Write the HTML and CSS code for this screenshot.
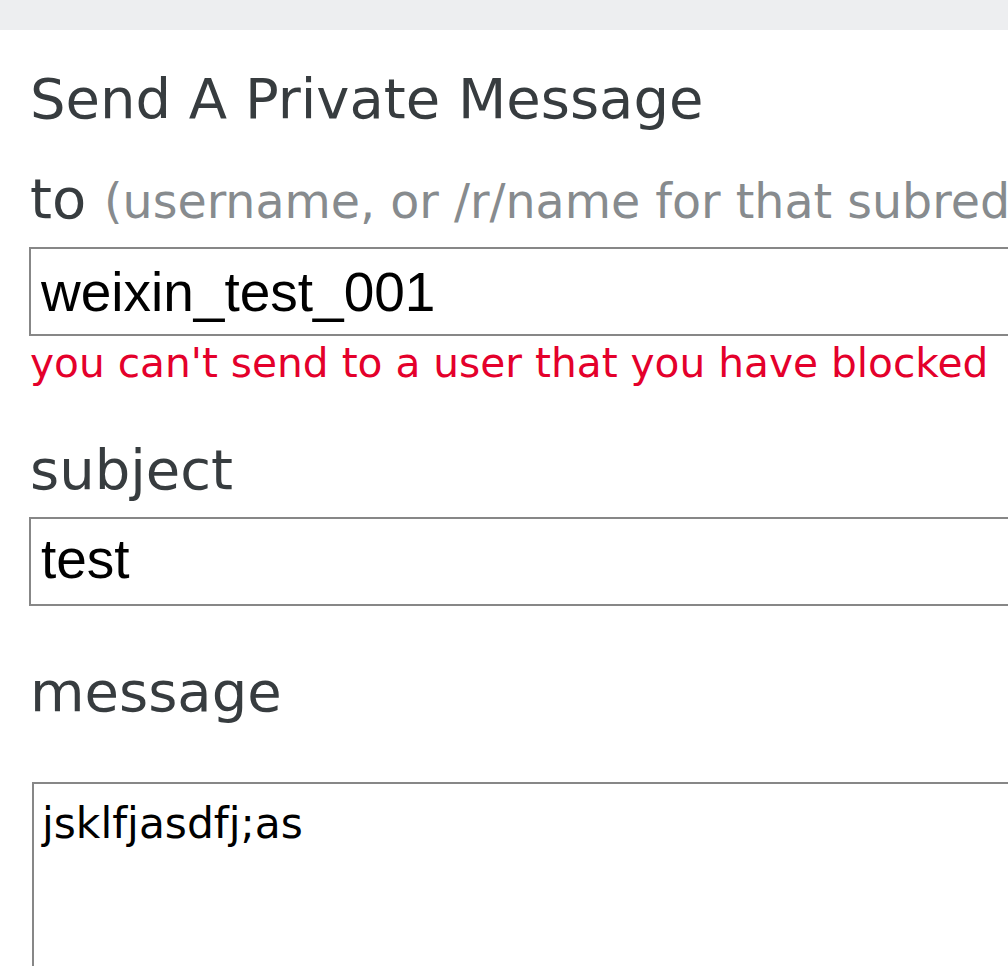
FILE: index.html
```html
<!DOCTYPE html>
<html lang="en">
<head>
<meta charset="utf-8">
<title>Send A Private Message</title>
<link rel="stylesheet" href="styles.css">
</head>
<body>
<div class="topbar"></div>
<main class="compose">
  <h1 class="title">Send A Private Message</h1>
  <div class="field">
    <label class="label" for="to">to <span class="hint">(username, or /r/name for that subreddit)</span></label>
    <input class="textbox" id="to" type="text" value="weixin_test_001">
    <div class="error">you can't send to a user that you have blocked</div>
  </div>
  <div class="field">
    <label class="label label-subject" for="subject">subject</label>
    <input class="textbox textbox-subject" id="subject" type="text" value="test">
  </div>
  <div class="field">
    <label class="label label-message" for="message">message</label>
    <textarea class="messagebox" id="message">jsklfjasdfj;as</textarea>
  </div>
</main>
</body>
</html>
```
FILE: styles.css
```css
html, body {
  margin: 0;
  padding: 0;
  background: #ffffff;
  overflow: hidden;
}

body {
  font-family: "DejaVu Sans", Verdana, sans-serif;
  color: #373c3f;
}

.topbar {
  height: 30px;
  background: #edeef0;
}

.compose {
  padding: 37px 0 0 30px;
  display: flex;
  flex-direction: column;
}

.title {
  margin: 0;
  font-size: 56px;
  line-height: 64px;
  font-weight: normal;
  color: #373c3f;
  white-space: nowrap;
}

.field {
  display: flex;
  flex-direction: column;
  align-items: flex-start;
}

.label {
  display: block;
  margin-top: 36px;
  font-size: 56px;
  line-height: 64px;
  height: 64px;
  color: #373c3f;
  white-space: nowrap;
}

.label-subject {
  margin-top: 51px;
}

.label-message {
  margin-top: 54px;
}

.hint {
  font-size: 47.5px;
  line-height: 40px;
  color: #878b8e;
}

.textbox {
  box-sizing: border-box;
  margin: 16px 0 0 -1px;
  width: 1100px;
  height: 89px;
  padding: 0 0 0 10px;
  border: 2px solid #878787;
  border-radius: 0;
  background: #fff;
  font-family: "Liberation Sans", Arial, sans-serif;
  font-size: 55px;
  color: #000;
  outline: none;
}

.textbox-subject {
  margin-top: 15px;
  height: 89px;
  padding-bottom: 6px;
}

.error {
  margin-top: 3px;
  font-size: 40.7px;
  line-height: 48px;
  color: #e4002b;
  white-space: nowrap;
}

.messagebox {
  box-sizing: border-box;
  margin: 58px 0 0 2px;
  width: 1100px;
  height: 400px;
  padding: 15px 0 0 8px;
  border: 2px solid #878787;
  border-radius: 0;
  background: #fff;
  font-family: "DejaVu Sans", Verdana, sans-serif;
  font-size: 42.4px;
  line-height: 50px;
  color: #000;
  resize: none;
  outline: none;
  overflow: hidden;
}
```
